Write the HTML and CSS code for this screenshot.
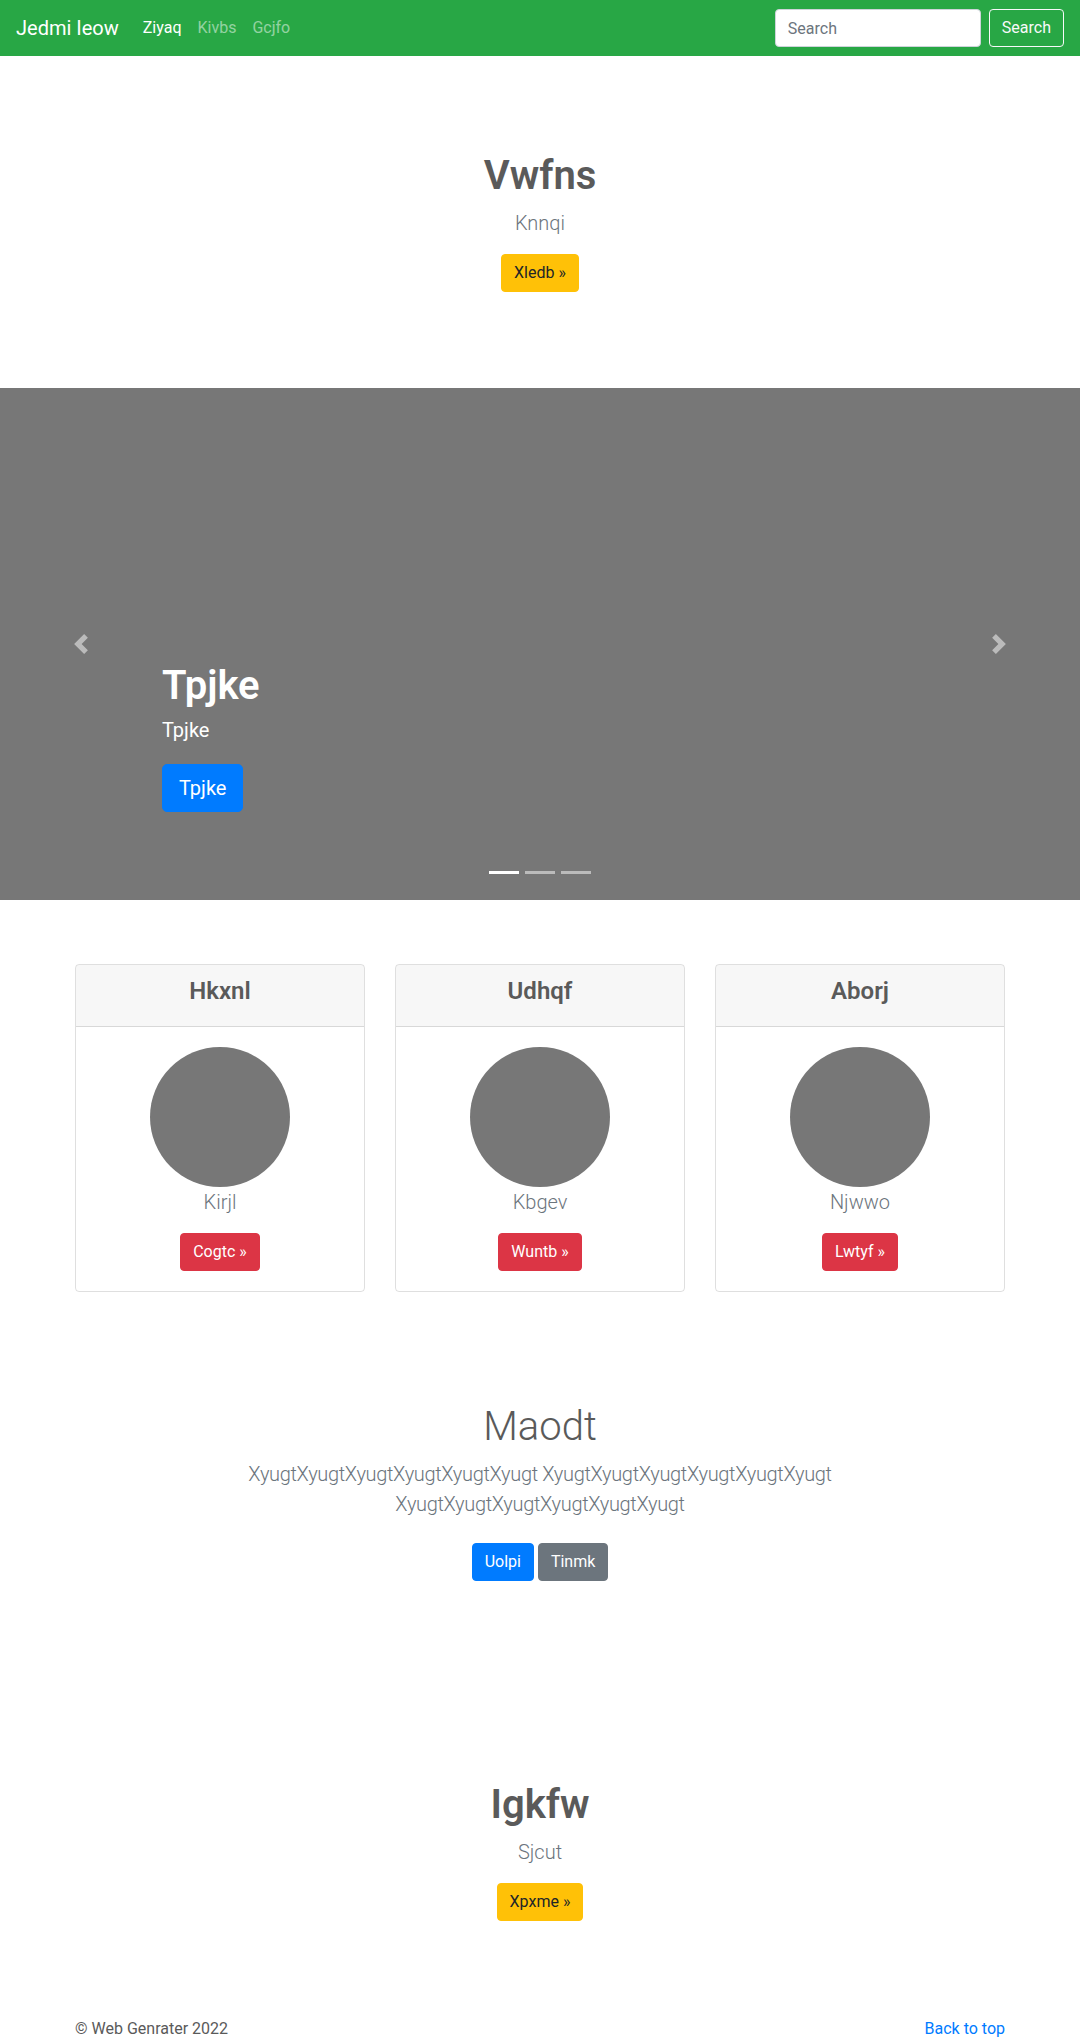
FILE: index.html
```html
<!DOCTYPE html>
<html lang="en">
<head>
<meta charset="utf-8">
<title>Jedmi Ieow</title>
<link rel="stylesheet" href="styles.css">
</head>
<body>
<header class="navbar">
  <a class="brand" href="#">Jedmi Ieow</a>
  <ul class="nav">
    <li><a class="nav-link active" href="#">Ziyaq</a></li>
    <li><a class="nav-link" href="#">Kivbs</a></li>
    <li><a class="nav-link" href="#">Gcjfo</a></li>
  </ul>
  <form class="search">
    <input class="search-input" type="text" placeholder="Search">
    <button class="btn btn-outline-light" type="button">Search</button>
  </form>
</header>

<section class="hero">
  <h1 class="hero-title">Vwfns</h1>
  <p class="lead muted">Knnqi</p>
  <p class="btn-row"><a class="btn btn-warning" href="#">Xledb &raquo;</a></p>
</section>

<div class="carousel">
  <ol class="indicators">
    <li class="active"></li>
    <li></li>
    <li></li>
  </ol>
  <div class="caption">
    <h1 class="caption-title">Tpjke</h1>
    <p class="caption-text">Tpjke</p>
    <p><a class="btn btn-lg btn-primary" href="#">Tpjke</a></p>
  </div>
  <a class="control control-prev" href="#">
    <svg width="20" height="20" viewBox="0 0 8 8"><path fill="#fff" d="M5.25 0l-4 4 4 4 1.5-1.5-2.5-2.5 2.5-2.5-1.5-1.5z"/></svg>
  </a>
  <a class="control control-next" href="#">
    <svg width="20" height="20" viewBox="0 0 8 8"><path fill="#fff" d="M2.75 0l-1.5 1.5 2.5 2.5-2.5 2.5 1.5 1.5 4-4-4-4z"/></svg>
  </a>
</div>

<div class="container marketing">
  <div class="card">
    <div class="card-header"><h4 class="card-title">Hkxnl</h4></div>
    <div class="card-body">
      <div class="avatar"></div>
      <p class="lead muted">Kirjl</p>
      <a class="btn btn-danger" href="#">Cogtc &raquo;</a>
    </div>
  </div>
  <div class="card">
    <div class="card-header"><h4 class="card-title">Udhqf</h4></div>
    <div class="card-body">
      <div class="avatar"></div>
      <p class="lead muted">Kbgev</p>
      <a class="btn btn-danger" href="#">Wuntb &raquo;</a>
    </div>
  </div>
  <div class="card">
    <div class="card-header"><h4 class="card-title">Aborj</h4></div>
    <div class="card-body">
      <div class="avatar"></div>
      <p class="lead muted">Njwwo</p>
      <a class="btn btn-danger" href="#">Lwtyf &raquo;</a>
    </div>
  </div>
</div>

<section class="album">
  <div class="album-inner">
    <h1 class="album-title">Maodt</h1>
    <p class="lead muted album-text">XyugtXyugtXyugtXyugtXyugtXyugt XyugtXyugtXyugtXyugtXyugtXyugt XyugtXyugtXyugtXyugtXyugtXyugt</p>
    <p class="album-actions">
      <a class="btn btn-primary" href="#">Uolpi</a>
      <a class="btn btn-secondary" href="#">Tinmk</a>
    </p>
  </div>
</section>

<section class="hero hero-bottom">
  <h1 class="hero-title">Igkfw</h1>
  <p class="lead muted">Sjcut</p>
  <p class="btn-row"><a class="btn btn-warning" href="#">Xpxme &raquo;</a></p>
</section>

<footer class="container footer">
  <p>&copy; Web Genrater 2022</p>
  <p><a class="link" href="#">Back to top</a></p>
</footer>
</body>
</html>
```

FILE: styles.css
```css
* {
  box-sizing: border-box;
}

body {
  margin: 0;
  font-family: Roboto, "Open Sans", "Liberation Sans", sans-serif;
  font-size: 16px;
  line-height: 1.5;
  color: #5a5a5a;
  background: #fff;
}

a {
  text-decoration: none;
}

p {
  margin: 0 0 16px;
}

h1, h4 {
  margin: 0 0 8px;
  line-height: 1.2;
}

/* navbar */
.navbar {
  display: flex;
  align-items: center;
  height: 56px;
  padding: 8px 16px;
  background: #28a745;
}

.brand {
  font-size: 20px;
  line-height: 30px;
  padding: 5px 0;
  margin-right: 16px;
  color: #fff;
}

.nav {
  display: flex;
  list-style: none;
  margin: 0;
  padding: 0;
}

.nav-link {
  display: block;
  padding: 8px;
  color: rgba(255, 255, 255, 0.5);
}

.nav-link.active {
  color: #fff;
}

.search {
  display: flex;
  margin: 0 0 0 auto;
}

.search-input {
  width: 206px;
  height: 38px;
  margin-right: 8px;
  padding: 6px 12px;
  font-family: inherit;
  font-size: 16px;
  color: #495057;
  background: #fff;
  border: 1px solid #ced4da;
  border-radius: 4px;
}

.search-input::placeholder {
  color: #6c757d;
}

/* buttons */
.btn {
  display: inline-block;
  padding: 6px 12px;
  font-family: inherit;
  font-size: 16px;
  line-height: 24px;
  border: 1px solid transparent;
  border-radius: 4px;
  vertical-align: middle;
  cursor: pointer;
}

.btn-lg {
  padding: 8px 16px;
  font-size: 20px;
  line-height: 30px;
  border-radius: 5px;
}

.btn-outline-light {
  color: #f8f9fa;
  background: transparent;
  border-color: #f8f9fa;
}

.btn-warning {
  color: #212529;
  background: #ffc107;
  border-color: #ffc107;
}

.btn-primary {
  color: #fff;
  background: #007bff;
  border-color: #007bff;
}

.btn-secondary {
  color: #fff;
  background: #6c757d;
  border-color: #6c757d;
}

.btn-danger {
  color: #fff;
  background: #dc3545;
  border-color: #dc3545;
}

.lead {
  font-size: 20px;
  font-weight: 300;
  line-height: 30px;
}

.muted {
  color: #6c757d;
}

/* hero sections */
.hero {
  padding: 96px 0;
  text-align: center;
}

.hero-title {
  font-size: 40px;
  font-weight: 600;
}

.btn-row {
  margin: 0;
}

/* carousel */
.carousel {
  position: relative;
  height: 512px;
  margin-bottom: 64px;
  background: #777;
  overflow: hidden;
}

.caption {
  position: absolute;
  left: 15%;
  right: 15%;
  bottom: 52px;
  padding: 20px 0;
  color: #fff;
  text-align: left;
}

.caption-title {
  margin-bottom: 5px;
  font-size: 40px;
  font-weight: 600;
}

.caption-text {
  margin-bottom: 19px;
  font-size: 20px;
  line-height: 30px;
}

.control {
  position: absolute;
  top: 0;
  bottom: 0;
  width: 15%;
  display: flex;
  align-items: center;
  justify-content: center;
  opacity: 0.5;
}

.control-prev {
  left: 0;
}

.control-next {
  right: 0;
}

.indicators {
  position: absolute;
  left: 0;
  right: 0;
  bottom: 26px;
  display: flex;
  justify-content: center;
  margin: 0;
  padding: 0;
  list-style: none;
}

.indicators li {
  width: 30px;
  height: 3px;
  margin: 0 3px;
  background: rgba(255, 255, 255, 0.5);
}

.indicators li.active {
  background: #fff;
}

/* marketing cards */
.container {
  width: 930px;
  margin: 0 auto;
}

.marketing {
  display: grid;
  grid-template-columns: repeat(3, 1fr);
  column-gap: 30px;
}

.card {
  margin-bottom: 24px;
  text-align: center;
  border: 1px solid rgba(0, 0, 0, 0.125);
  border-radius: 4px;
  overflow: hidden;
}

.card-header {
  padding: 12px 20px;
  background: rgba(0, 0, 0, 0.03);
  border-bottom: 1px solid rgba(0, 0, 0, 0.125);
}

.card-title {
  font-size: 24px;
  font-weight: 600;
}

.card-body {
  padding: 20px;
}

.avatar {
  width: 140px;
  height: 140px;
  margin: 0 auto;
  border-radius: 50%;
  background: #777;
}

/* album */
.album {
  padding: 87px 0 96px;
  text-align: center;
}

.album-inner {
  max-width: 660px;
  margin: 0 auto;
}

.album-title {
  font-size: 40px;
  font-weight: 300;
}

.album-text {
  letter-spacing: -0.35px;
}

.album-actions {
  margin: 0;
}

.album-actions .btn {
  margin: 8px 0;
}

/* footer */
.footer {
  display: flex;
  justify-content: space-between;
}

.link {
  color: #007bff;
}
```
